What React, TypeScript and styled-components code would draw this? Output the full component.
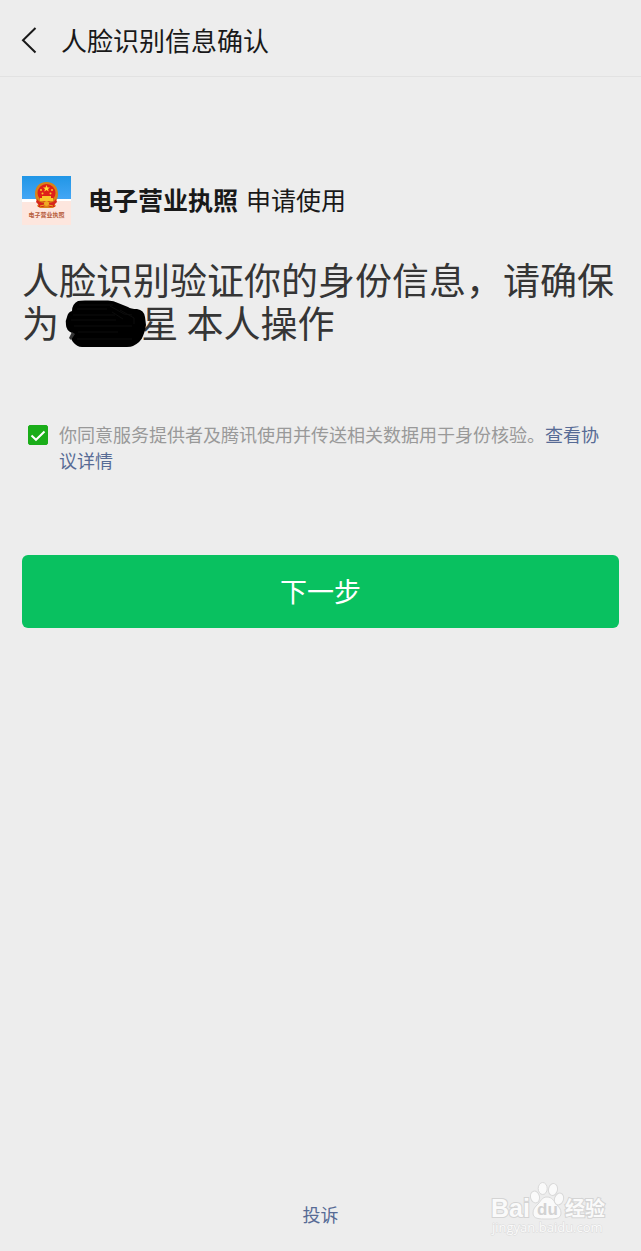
import React, { useState } from 'react';
import styled, { createGlobalStyle } from 'styled-components';

const GlobalStyle = createGlobalStyle`
  *, *::before, *::after { box-sizing: border-box; }
  body {
    margin: 0;
    background: #ededed;
    color: #191919;
    font-family: "Noto Sans CJK SC", "Noto Sans", sans-serif;
  }
`;

const Page = styled.div`
  position: relative;
  display: flex;
  flex-direction: column;
  min-height: 100vh;
`;

const Header = styled.header`
  display: flex;
  align-items: center;
  gap: 20px;
  height: 77px;
  padding: 4px 16px 0;
  border-bottom: 1px solid #e2e2e2;
`;

const BackButton = styled.button`
  display: flex;
  padding: 0;
  border: 0;
  background: none;
  color: #191919;
  cursor: pointer;
`;

const Title = styled.h1`
  margin: 0;
  font-size: 26px;
  line-height: 40px;
  font-weight: 400;
`;

const Main = styled.main`
  flex: 1;
  padding: 99px 22px 0;
`;

const AppRow = styled.div`
  display: flex;
  align-items: flex-start;
  gap: 17px;
`;

const AppText = styled.p`
  display: flex;
  gap: 8px;
  margin: 0;
  font-size: 25px;
  line-height: 46px;
`;

const Statement = styled.h2`
  margin: 33px 0 0;
  color: #353535;
  font-size: 37px;
  line-height: 43px;
  font-weight: 400;
`;

const HiddenName = styled.span`
  position: relative;
  display: inline-block;
  width: 74px;
  height: 36px;
  vertical-align: middle;
`;

const Scribble = styled.svg`
  position: absolute;
  left: -2px;
  top: -10px;
`;

const Agreement = styled.div`
  display: flex;
  align-items: flex-start;
  gap: 11px;
  margin-top: 75px;
  padding: 0 10px 0 6px;
  color: #999999;
  font-size: 18px;
  line-height: 26px;
`;

const CheckWrap = styled.span`
  position: relative;
  display: flex;
  flex: none;
  margin-top: 4px;
`;

const Checkbox = styled.input`
  appearance: none;
  width: 20px;
  height: 20px;
  margin: 0;
  border: 1px solid #1aad19;
  border-radius: 2px;
  background: #ffffff;
  &:checked { background: #1aad19; }
`;

const CheckMark = styled.svg`
  position: absolute;
  inset: 0;
  pointer-events: none;
`;

const Link = styled.a`
  color: #576b95;
  text-decoration: none;
`;

const NextButton = styled.button`
  display: block;
  width: 100%;
  height: 73px;
  margin-top: 82px;
  padding: 0;
  border: 0;
  border-radius: 6px;
  background: #09c160;
  color: #ffffff;
  font-family: inherit;
  font-size: 27px;
  line-height: 40px;
  cursor: pointer;
`;

const Footer = styled.footer`
  padding: 24px 22px;
  text-align: center;
  font-size: 18px;
  line-height: 26px;
`;

const WatermarkSvg = styled.svg`
  position: absolute;
  right: 31px;
  bottom: 11px;
  pointer-events: none;
`;

function AppLogo() {
  return (
    <svg width="49" height="49" viewBox="0 0 49 49" role="img" aria-label="电子营业执照">
      <defs>
        <linearGradient id="sky" x1="0" y1="0" x2="0" y2="1">
          <stop offset="0" stopColor="#2196e6" />
          <stop offset="1" stopColor="#43a6f5" />
        </linearGradient>
      </defs>
      <rect width="49" height="49" fill="#fde6de" />
      <rect width="49" height="23" fill="url(#sky)" />
      <path d="M0 23h49v2H35L14 26H0z" fill="#ffffff" />
      <path d="M24.500 6C17 6 13 11.500 13 18c0 4 1.500 7 4 9l-2 3 3 2h13l3-2-2-3c2.500-2 4-5 4-9 0-6.500-4-12-11.500-12z" fill="#d98218" />
      <circle cx="24.500" cy="17" r="9" fill="#df1f19" />
      <path d="M24.500 9l1 2.400 2.500.1-2 1.600.7 2.400-2.200-1.400-2.200 1.400.7-2.400-2-1.600 2.500-.1z" fill="#ffdc38" />
      <g fill="#f9c52b">
        <circle cx="19" cy="14" r="1" /><circle cx="30" cy="14" r="1" />
        <circle cx="20.500" cy="17.500" r="1" /><circle cx="28.500" cy="17.500" r="1" />
        <path d="M20 20h9v2h2v3H18v-3h2z" />
      </g>
      <path d="M15 23c2 3 5 4 9.500 4s7.500-1 9.500-4l1 3-3 3 1 2h-5l-3.500-2-3.500 2h-5l1-2-3-3z" fill="#d7261b" />
      <circle cx="24.500" cy="27.500" r="2.500" fill="#efac25" />
      <path d="M18 30l6.500-1.500L31 30" stroke="#efac25" fill="none" />
      <text x="24.500" y="41" textAnchor="middle" fontSize="6" fontWeight="700" fill="#b8603f">电子营业执照</text>
    </svg>
  );
}

function NameCover() {
  return (
    <Scribble width="82" height="48" viewBox="0 0 82 48" aria-hidden="true">
      <path d="M13 1Q15 .5 20 .5H43Q49 .5 53 3L63 7Q66 9 72 9Q79 10 80 17L81 25Q80 32 78 36Q76 42 68 46Q66 47 62 47H17Q12 47 8 42Q5 39 7 33Q1 30 1 25Q0 21 2 17Q3 12 7 11Q7 4 13 1Z" fill="#000000" />
      <path d="M4 38l3-6 3 2-4 6z" fill="#353535" />
      <path d="M14 5h34M12 9h30M8 15h42M6 20h45M9 26h58M13 32h40M12 39h55M45 6l14 8 8 1M47 12l11 7M55 10l14 8v6" fill="none" stroke="#0c0c0c" />
    </Scribble>
  );
}

function Watermark() {
  return (
    <WatermarkSvg width="120" height="58" viewBox="0 0 120 58" aria-label="Baidu 经验">
      <g fill="#fafafa" stroke="#d9d9d9" strokeWidth="1">
        <path d="M57 15c5 0 7 4 9 7 3 3 5 5 5 9 0 6-6 6-14 6s-14 0-14-6c0-4 2-6 5-9 3-3 4-7 9-7z" />
        <ellipse cx="45" cy="15" rx="4.500" ry="6" transform="rotate(-14 45 15)" />
        <ellipse cx="52.700" cy="6.500" rx="4.500" ry="6" />
        <ellipse cx="63" cy="7.500" rx="4.500" ry="6" transform="rotate(12 63 7.500)" />
        <ellipse cx="69" cy="17" rx="4.500" ry="6" transform="rotate(18 69 17)" />
      </g>
      <g fill="#fafafa" stroke="#d4d4d4" strokeWidth="2" paintOrder="stroke" fontWeight="700">
        <text x="1" y="35" fontSize="25" fontFamily="Liberation Sans, sans-serif">Bai</text>
        <text x="75" y="34" fontSize="20">经验</text>
      </g>
      <text x="47" y="33" fontSize="17" fontWeight="700" fontFamily="Liberation Sans, sans-serif" fill="#d2d2d2">du</text>
      <text x="2" y="50" fontSize="13" fontFamily="Open Sans, sans-serif" fill="#fafafa" stroke="#dadada" strokeWidth="1" paintOrder="stroke">jingyan.baidu.com</text>
    </WatermarkSvg>
  );
}

export default function App() {
  const [agreed, setAgreed] = useState(true);
  return (
    <Page>
      <GlobalStyle />
      <Header>
        <BackButton type="button" aria-label="返回">
          <svg width="25" height="28" viewBox="0 0 25 28" fill="none" stroke="currentColor" strokeWidth="2">
            <path d="M19.500 2L7 14.200 19.500 26.500" />
          </svg>
        </BackButton>
        <Title>人脸识别信息确认</Title>
      </Header>
      <Main>
        <AppRow>
          <AppLogo />
          <AppText><strong>电子营业执照</strong><span>申请使用</span></AppText>
        </AppRow>
        <Statement>
          人脸识别验证你的身份信息，请确保为 <HiddenName><NameCover /></HiddenName>星 本人操作
        </Statement>
        <Agreement>
          <CheckWrap>
            <Checkbox id="agree" type="checkbox" checked={agreed} onChange={(e) => setAgreed(e.target.checked)} />
            {agreed && (
              <CheckMark width="20" height="20" viewBox="0 0 20 20" fill="none" stroke="#ffffff" strokeWidth="2">
                <path d="M3.500 10.500l4.500 4.300L16.500 6.500" />
              </CheckMark>
            )}
          </CheckWrap>
          <div>
            <label htmlFor="agree">你同意服务提供者及腾讯使用并传送相关数据用于身份核验。</label>
            <Link href="#agreement">查看协议详情</Link>
          </div>
        </Agreement>
        <NextButton type="button">下一步</NextButton>
      </Main>
      <Footer><Link href="#complaint">投诉</Link></Footer>
      <Watermark />
    </Page>
  );
}
